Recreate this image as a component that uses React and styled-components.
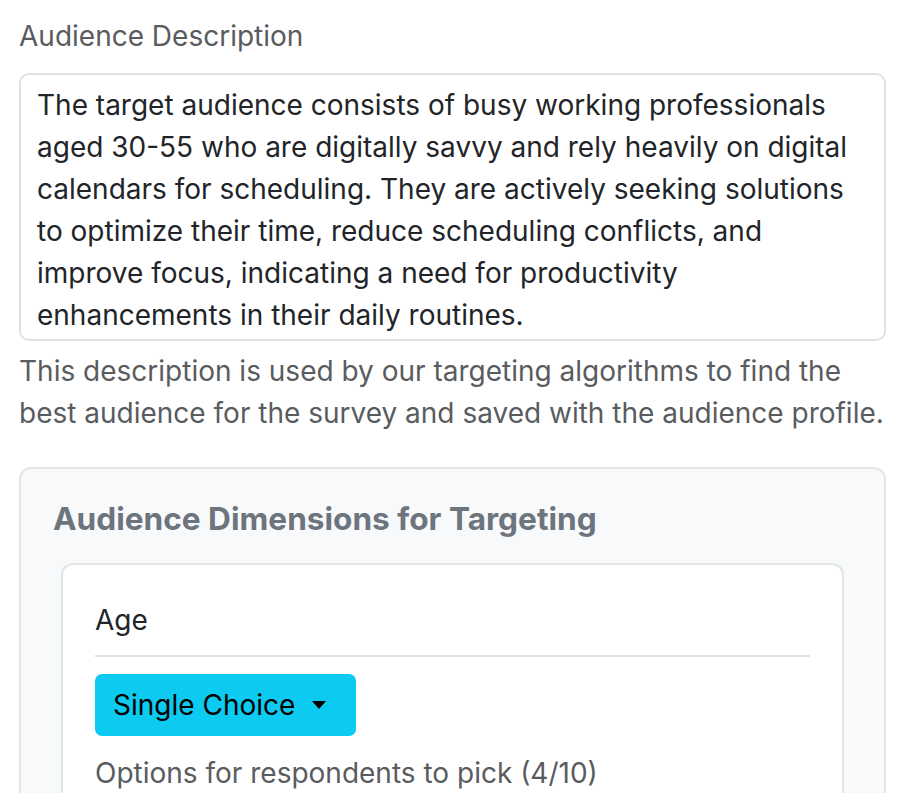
import React from "react";
import styled, { createGlobalStyle } from "styled-components";

const Global = createGlobalStyle`
  html, body { margin: 0; padding: 0; background: #ffffff; }
  body { font-family: Inter, "Noto Sans", "Liberation Sans", sans-serif; }
  * { box-sizing: border-box; }
`;

const Page = styled.div`
  padding: 15px 18px 0 19px;
  font-family: Inter, "Noto Sans", "Liberation Sans", sans-serif;
  font-size: 28px;
  line-height: 42px;
  color: #212529;
`;

const Label = styled.label`
  display: block;
  color: #595c5f;
  margin-bottom: 16px;
`;

const TextArea = styled.textarea`
  display: block;
  width: 100%;
  height: 268px;
  padding: 9px 17px 5px 16px;
  border: 2px solid #dee2e6;
  border-radius: 10px;
  font: inherit;
  font-size: 28px;
  line-height: 42px;
  color: #212529;
  resize: none;
  overflow: hidden;
  background: #fff;
  outline: none;
`;

const Help = styled.p`
  margin: 9px 0 0;
  color: #595c5f;
`;

const Panel = styled.section`
  margin-top: 33px;
  background: #f8f9fa;
  border: 2px solid #e3e6e9;
  border-bottom: none;
  border-radius: 12px 12px 0 0;
  padding: 32px 32px 0;
  min-height: 340px;
`;

const PanelTitle = styled.h5`
  margin: 0 0 26px;
  font-size: 31.6px;
  line-height: 36px;
  font-weight: 700;
  color: #6c757d;
`;

const Card = styled.div`
  margin: 0 8px;
  background: #fff;
  border: 2px solid #e3e6e9;
  border-bottom: none;
  border-radius: 12px 12px 0 0;
  padding: 34px 32px 0;
  min-height: 240px;
`;

const CardTitle = styled.div`
  color: #212529;
`;

const Divider = styled.hr`
  margin: 14px 0 17px;
  border: none;
  border-top: 2px solid #dee2e6;
  opacity: 1;
`;

const DropButton = styled.button`
  display: inline-flex;
  align-items: center;
  height: 62px;
  padding: 0 30px 0 18px;
  border: none;
  border-radius: 7px;
  background: #0dcaf0;
  color: #000;
  font: inherit;
  font-size: 28px;
  line-height: 42px;
  cursor: pointer;
`;

const Caret = styled.span`
  display: inline-block;
  margin-left: 17px;
  width: 0;
  height: 0;
  border-top: 8px solid #000;
  border-left: 7.5px solid transparent;
  border-right: 7.5px solid transparent;
`;

const Muted = styled.div`
  margin-top: 16px;
  color: #595c5f;
`;

export default function App() {
  return (
    <>
      <Global />
      <Page>
        <Label htmlFor="desc">Audience Description</Label>
        <TextArea
          id="desc"
          readOnly
          defaultValue="The target audience consists of busy working professionals aged 30-55 who are digitally savvy and rely heavily on digital calendars for scheduling. They are actively seeking solutions to optimize their time, reduce scheduling conflicts, and improve focus, indicating a need for productivity enhancements in their daily routines."
        />
        <Help>
          This description is used by our targeting algorithms to find the best audience for the survey and saved with the audience profile.
        </Help>
        <Panel>
          <PanelTitle>Audience Dimensions for Targeting</PanelTitle>
          <Card>
            <CardTitle>Age</CardTitle>
            <Divider />
            <DropButton type="button">
              Single Choice
              <Caret />
            </DropButton>
            <Muted>Options for respondents to pick (4/10)</Muted>
          </Card>
        </Panel>
      </Page>
    </>
  );
}
